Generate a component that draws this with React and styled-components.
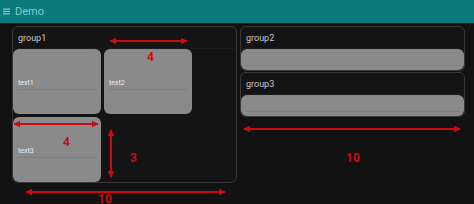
import React from "react";
import styled, { createGlobalStyle } from "styled-components";

const GlobalStyle = createGlobalStyle`
  html, body {
    margin: 0;
    padding: 0;
    background: #121212;
    font-family: Roboto, "Liberation Sans", sans-serif;
  }
`;

const Page = styled.div`
  position: relative;
  width: 474px;
  height: 204px;
  overflow: hidden;
  background: #121212;
`;

const Header = styled.header`
  height: 23px;
  background: #0a7a7d;
  display: flex;
  align-items: center;
  padding-left: 3px;
  gap: 5px;
  color: #86c9cb;
  font-size: 11px;
`;

const Content = styled.main`
  display: flex;
  gap: 3px;
  padding: 3px 0 0 12px;
`;

const Column = styled.div`
  display: flex;
  flex-direction: column;
  gap: 1px;
  width: 225px;
`;

const Group = styled.section`
  box-sizing: border-box;
  width: 225px;
  height: ${(p) => p.$height}px;
  border: 1px solid #383838;
  border-radius: 6px;
  background: #141414;
  display: flex;
  flex-direction: column;
`;

const GroupTitle = styled.div`
  height: 21px;
  flex: none;
  display: flex;
  align-items: center;
  padding-left: 5px;
  color: #c8c8c8;
  font-size: 9px;
  border-bottom: 1px solid #1c1c1c;
`;

const CardGrid = styled.div`
  display: grid;
  grid-template-columns: 88px 88px;
  grid-auto-rows: 65px;
  gap: 3px;
`;

const Card = styled.div`
  background: #8a8a8a;
  border-radius: 6px;
  display: flex;
  flex-direction: column;
  justify-content: center;
  padding: 5px 4px 0;
`;

const FieldLabel = styled.div`
  color: #eeeeee;
  font-size: 7px;
  padding: 0 1px 2px;
  border-bottom: 1px solid #5f8c8c;
`;

const Input = styled.div`
  height: 21px;
  background: #8a8a8a;
  border-radius: 6px;
  box-sizing: border-box;
  padding: 0 4px 4px;
  display: flex;
  align-items: flex-end;
`;

const InputLine = styled.div`
  flex: 1;
  border-bottom: 1px solid #5f8c8c;
`;

const Overlay = styled.svg`
  position: absolute;
  left: 0;
  top: 0;
  pointer-events: none;
`;

const Mark = styled.span`
  position: absolute;
  color: #cc0c0c;
  font-weight: 700;
  font-size: 12px;
  line-height: 1;
`;

const arrows = [
  { x1: 110, y1: 41, x2: 187, y2: 41 },
  { x1: 14, y1: 124, x2: 98, y2: 124 },
  { x1: 111, y1: 130, x2: 111, y2: 177 },
  { x1: 26, y1: 192, x2: 225, y2: 192 },
  { x1: 244, y1: 129, x2: 460, y2: 129 },
];

const marks = [
  { t: "4", x: 147, y: 51 },
  { t: "4", x: 63, y: 136 },
  { t: "3", x: 130, y: 152 },
  { t: "10", x: 98, y: 193 },
  { t: "10", x: 346, y: 152 },
];

const Hamburger = () => (
  <svg width="7" height="7" viewBox="0 0 7 7">
    <rect x="0" y="0.5" width="7" height="1.2" fill="#86c9cb" />
    <rect x="0" y="2.9" width="7" height="1.2" fill="#86c9cb" />
    <rect x="0" y="5.3" width="7" height="1.2" fill="#86c9cb" />
  </svg>
);

const Arrow = ({ x1, y1, x2, y2 }) => (
  <line
    x1={x1}
    y1={y1}
    x2={x2}
    y2={y2}
    stroke="#cc0c0c"
    strokeWidth="2"
    markerStart="url(#head)"
    markerEnd="url(#head)"
  />
);

const App = () => (
  <Page>
    <GlobalStyle />
    <Header>
      <Hamburger />
      <span>Demo</span>
    </Header>
    <Content>
      <Group $height={157}>
        <GroupTitle>group1</GroupTitle>
        <CardGrid>
          <Card><FieldLabel>text1</FieldLabel></Card>
          <Card><FieldLabel>text2</FieldLabel></Card>
          <Card><FieldLabel>text3</FieldLabel></Card>
        </CardGrid>
      </Group>
      <Column>
        <Group $height={45}>
          <GroupTitle>group2</GroupTitle>
          <Input><InputLine /></Input>
        </Group>
        <Group $height={45}>
          <GroupTitle>group3</GroupTitle>
          <Input><InputLine /></Input>
        </Group>
      </Column>
    </Content>
    <Overlay width="474" height="204">
      <defs>
        <marker id="head" viewBox="0 0 10 10" refX="9" refY="5" markerWidth="3.5" markerHeight="3.5" orient="auto-start-reverse">
          <path d="M0 0 L10 5 L0 10 z" fill="#cc0c0c" />
        </marker>
      </defs>
      {arrows.map((a, i) => <Arrow key={i} {...a} />)}
    </Overlay>
    {marks.map((m, i) => (
      <Mark key={i} style={{ left: m.x, top: m.y }}>{m.t}</Mark>
    ))}
  </Page>
);

export default App;
